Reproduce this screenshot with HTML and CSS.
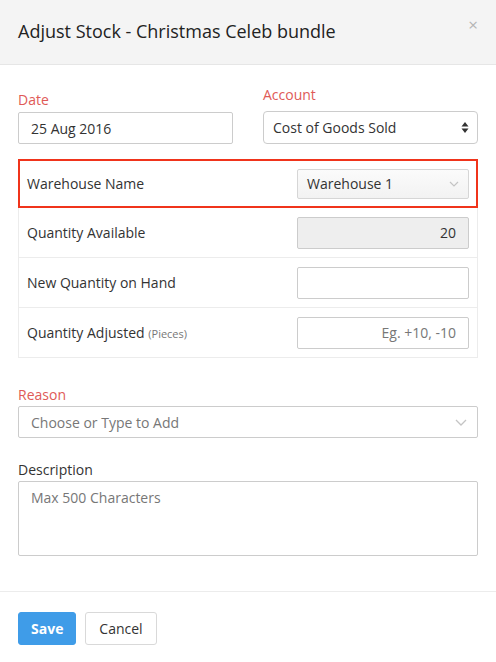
FILE: index.html
```html
<!DOCTYPE html>
<html lang="en">
<head>
<meta charset="utf-8">
<title>Adjust Stock</title>
<link rel="stylesheet" href="styles.css">
</head>
<body>
<div class="modal">
  <div class="modal-header">
    <h1 class="modal-title">Adjust Stock - Christmas Celeb bundle</h1>
    <span class="close">&times;</span>
  </div>

  <div class="modal-body">
    <div class="top-grid">
      <div class="field field-date">
        <label class="label required">Date</label>
        <div class="input">25 Aug 2016</div>
      </div>
      <div class="field field-account">
        <label class="label required">Account</label>
        <div class="input select-native">
          <span>Cost of Goods Sold</span>
          <svg class="updown" width="8" height="13" viewBox="0 0 8 13"><path d="M4 1 L7.5 5.5 H0.5 Z M4 12 L7.5 7.5 H0.5 Z" fill="#333"/></svg>
        </div>
      </div>
    </div>

    <div class="stock-table">
      <div class="stock-row highlighted">
        <span class="row-label">Warehouse Name</span>
        <div class="input select-box">
          <span>Warehouse 1</span>
          <svg class="chev" width="10" height="6" viewBox="0 0 10 6"><path d="M1 1 L5 5 L9 1" fill="none" stroke="#c4c4c4" stroke-width="1.2"/></svg>
        </div>
      </div>
      <div class="stock-row">
        <span class="row-label">Quantity Available</span>
        <div class="input num disabled">20</div>
      </div>
      <div class="stock-row">
        <span class="row-label">New Quantity on Hand</span>
        <div class="input num"></div>
      </div>
      <div class="stock-row">
        <span class="row-label">Quantity Adjusted <small class="unit">(Pieces)</small></span>
        <div class="input num placeholder">Eg. +10, -10</div>
      </div>
    </div>

    <div class="field field-reason">
      <label class="label required">Reason</label>
      <div class="input select-wide placeholder">
        <span>Choose or Type to Add</span>
        <svg class="chev" width="12" height="7" viewBox="0 0 12 7"><path d="M1 1 L6 6 L11 1" fill="none" stroke="#c4c4c4" stroke-width="1.3"/></svg>
      </div>
    </div>

    <div class="field field-desc">
      <label class="label">Description</label>
      <div class="input textarea placeholder">Max 500 Characters</div>
    </div>
  </div>

  <div class="modal-footer">
    <button class="btn btn-primary">Save</button>
    <button class="btn btn-default">Cancel</button>
  </div>
</div>
</body>
</html>
```

FILE: styles.css
```css
* { box-sizing: border-box; }

html, body {
  margin: 0;
  padding: 0;
  background: #fff;
}

body {
  font-family: "Open Sans", "Liberation Sans", sans-serif;
  font-size: 14px;
  color: #333;
  width: 496px;
}

.modal-header {
  height: 65px;
  background: #f4f4f4;
  border-bottom: 1px solid #e6e6e6;
  display: flex;
  justify-content: space-between;
  align-items: flex-start;
  padding: 0 18px;
}

.modal-title {
  margin: 19px 0 0;
  font-size: 18px;
  font-weight: 400;
  line-height: 24px;
  color: #222;
}

.close {
  margin-top: 14px;
  margin-right: 0;
  font-size: 17px;
  line-height: 22px;
  color: #b5b5b5;
}

.modal-body {
  padding: 21px 18px 35px;
}

.top-grid {
  display: grid;
  grid-template-columns: 215px 215px;
  column-gap: 30px;
  align-items: end;
}

.label {
  display: block;
  line-height: 18px;
}

.required { color: #e05a57; }

.field-date .label { margin-bottom: 3px; }
.field-account .label { margin-bottom: 7px; }

.input {
  height: 32px;
  border: 1px solid #ccc;
  border-radius: 2px;
  background: #fff;
  padding: 0 12px;
  display: flex;
  align-items: center;
  color: #333;
}

.select-native {
  height: 33px;
  border-radius: 4px;
  padding-left: 9px;
  padding-right: 8px;
  justify-content: space-between;
}

.stock-table {
  margin-top: 15px;
}

.stock-row {
  height: 50px;
  display: flex;
  align-items: center;
  justify-content: space-between;
  padding: 0 8px;
  border: 1px solid #ececec;
  border-top: none;
}

.stock-row.highlighted {
  height: 49px;
  border: 2px solid #f0341b;
  padding: 0 7px;
}

.row-label { color: #333; }

.unit {
  font-size: 11px;
  color: #777;
}

.stock-row .input {
  width: 172px;
}

.select-box {
  height: 30px;
  border-color: #d6d6d6;
  background: linear-gradient(#fbfbfb, #f2f2f2);
  padding: 0 9px;
  justify-content: space-between;
}

.num {
  justify-content: flex-end;
}

.disabled {
  background: #eee;
}

.placeholder { color: #777; }

.field-reason {
  margin-top: 28px;
}

.field-reason .label,
.field-desc .label { margin-bottom: 2px; }

.select-wide {
  justify-content: space-between;
  padding-right: 10px;
}

.field-desc {
  margin-top: 23px;
}

.textarea {
  height: 75px;
  align-items: flex-start;
  padding-top: 6px;
}

.modal-footer {
  border-top: 1px solid #ececec;
  padding: 20px 18px;
  display: flex;
  gap: 9px;
}

.btn {
  height: 33px;
  border-radius: 3px;
  font-family: inherit;
  font-size: 14px;
  padding: 0 12px;
  cursor: pointer;
}

.btn-primary {
  width: 58px;
  background: #3f9ce8;
  border: 1px solid #3f9ce8;
  color: #fff;
  font-weight: 700;
}

.btn-default {
  width: 72px;
  background: #fff;
  border: 1px solid #d9d9d9;
  color: #333;
}
```
